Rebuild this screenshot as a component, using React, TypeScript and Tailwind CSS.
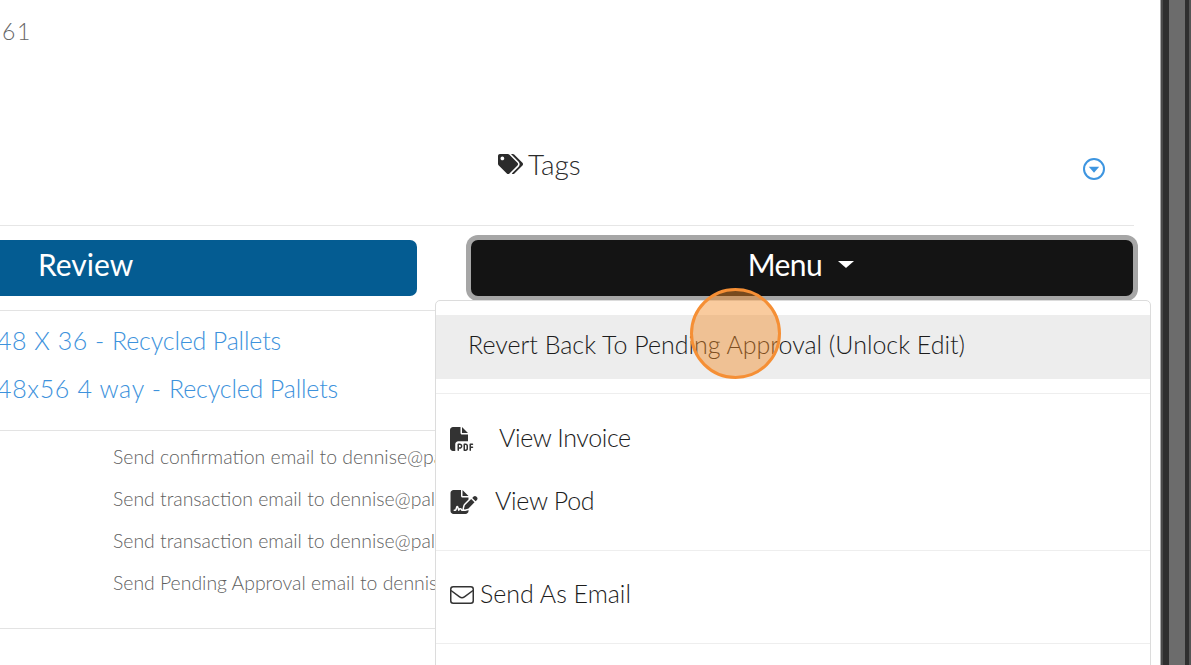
import { FaTags } from 'react-icons/fa'
import { FaFilePdf, FaFileSignature } from 'react-icons/fa6'

const logLines = [
  'Send confirmation email to dennise@palletsrus.com',
  'Send transaction email to dennise@palletsrus.com',
  'Send transaction email to dennise@palletsrus.com',
  'Send Pending Approval email to dennise@palletsrus.com',
]

function CaretCircle() {
  return (
    <svg width="24" height="24" viewBox="0 0 24 24" className="text-[#3d95e0]">
      <circle cx="12" cy="12" r="10" fill="none" stroke="currentColor" strokeWidth="2" />
      <path d="M6.8 9.8h10.4L12 15.8z" fill="currentColor" />
    </svg>
  )
}

function EnvelopeIcon() {
  return (
    <svg width="24" height="18" viewBox="0 0 24 18" fill="none" stroke="#333333" strokeWidth="1.5" className="mb-[4px]">
      <rect x="0.75" y="0.75" width="22.5" height="16.5" rx="2.5" />
      <path d="M1 4.5l8.6 6.4c1.5 1.1 3.3 1.1 4.8 0L23 4.5" />
    </svg>
  )
}

function DropdownMenu() {
  return (
    <div className="absolute left-[435px] top-[300px] w-[716px] h-[380px] bg-white border border-[#dcdcdc] rounded-t-[5px] pt-[14px] text-[25px] text-[#1c1c1c]">
      <div className="h-[64px] bg-[#ededed] flex items-center pl-[32px] pb-[4px]">Revert Back To Pending Approval (Unlock Edit)</div>
      <div className="mt-[14px] border-t border-[#eeeeee]" />
      <div className="h-[63px] mt-[13px] flex items-center pl-[14px]">
        <FaFilePdf className="w-[24px] h-[24px] text-[#333333]" />
        <span className="ml-[25px] pb-[2px] tracking-[-0.4px]">View Invoice</span>
      </div>
      <div className="h-[63px] flex items-center pl-[14px]">
        <FaFileSignature className="w-[28px] h-[24px] text-[#333333]" />
        <span className="ml-[17px] pb-[2px] tracking-[-0.3px]">View Pod</span>
      </div>
      <div className="mt-[17px] border-t border-[#eeeeee]" />
      <div className="h-[92px] flex items-center pl-[14px]">
        <EnvelopeIcon />
        <span className="ml-[6px] pb-[7px]">Send As Email</span>
      </div>
      <div className="border-t border-[#eeeeee]" />
    </div>
  )
}

export default function App() {
  return (
    <div className="relative flex h-[665px] w-[1191px] overflow-hidden bg-white font-['Lato',sans-serif] font-light">
      <main className="w-[1160px] shrink-0">
        <div className="h-[225px] relative">
          <div className="pt-[17px] text-[23px] leading-[28px] text-[#666666] tracking-[1.7px] ml-[2px]">61</div>
          <div className="flex items-start mt-[104px]">
            <div className="ml-[498px] flex items-center gap-[5px] text-[28px] leading-[30px] text-[#2b2b2b]">
              <FaTags className="w-[25px] h-[22px]" />
              <span>Tags</span>
            </div>
            <div className="ml-[501px] mt-[8px]"><CaretCircle /></div>
          </div>
        </div>
        <div className="w-[1134px] border-t border-[#e6e6e6]" />

        <div className="flex items-start mt-[14px]">
          <button className="w-[417px] h-[56px] pb-[8px] bg-[#045c92] rounded-r-[7px] text-white text-[30px] font-normal text-left pl-[38px]">Review</button>
          <button className="ml-[54px] w-[662px] h-[56px] pb-[8px] pr-[2px] bg-[#141414] rounded-[7px] ring-[5px] ring-[#a6a6a6] text-white text-[30px] font-normal flex items-center justify-center">
            <span className="tracking-[-0.5px]">Menu</span>
            <span className="ml-[16px] w-0 h-0 border-x-[8px] border-x-transparent border-t-[7px] border-t-white" />
          </button>
        </div>

        <div className="w-[436px] mt-[14px] border-t border-[#e3e3e3] h-[120px] pt-[5px] text-[25px] text-[#3d92dc] overflow-hidden">
          <div className="h-[48px] leading-[48px] -ml-[3px] whitespace-nowrap">
            <span className="tracking-[0.5px]">48 X 36 - </span>
            <span className="tracking-[-0.17px]">Recycled Pallets</span>
          </div>
          <div className="h-[48px] leading-[48px] -ml-[3px] whitespace-nowrap">
            <span className="tracking-[0.65px]">48x56 4 way - </span>
            <span className="tracking-[-0.17px]">Recycled Pallets</span>
          </div>
        </div>

        <div className="w-[436px] border-t border-[#e3e3e3] h-[198px] pt-[5px] pl-[113px] overflow-hidden text-[19.4px] text-[#5f5f5f]">
          {logLines.map((line, i) => (
            <div key={i} className="h-[42px] leading-[42px] whitespace-nowrap">{line}</div>
          ))}
        </div>
        <div className="w-[436px] border-t border-[#e3e3e3]" />
      </main>

      <div className="flex h-full grow">
        <div className="w-px bg-[#a8a8a8]" />
        <div className="w-[2px] bg-[#4a4a4a]" />
        <div className="w-[6px] bg-[#2f2f2f]" />
        <div className="w-[16px] bg-[#6c6c6c]" />
        <div className="w-[4px] bg-[#2f2f2f]" />
        <div className="grow bg-[#555555]" />
      </div>

      <DropdownMenu />
      <div className="absolute left-[690px] top-[288px] w-[91px] h-[91px] rounded-full border-[3px] border-[#f58f35] bg-[#f28c28]/45" />
    </div>
  )
}
